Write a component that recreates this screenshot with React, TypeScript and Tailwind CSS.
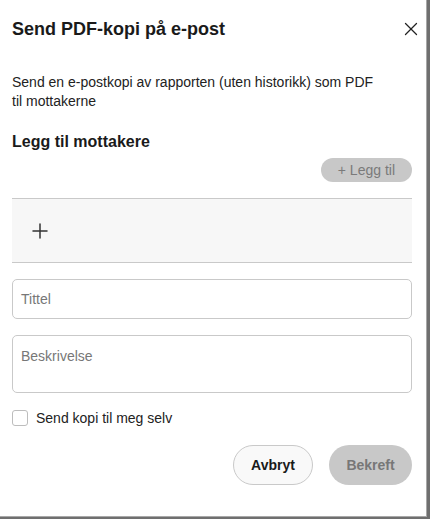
import { X, Plus } from 'lucide-react';

export default function App() {
  return (
    <div className="w-[430px] h-[519px] bg-[#6f6f6f] overflow-hidden" style={{ fontFamily: '"Liberation Sans", Arial, sans-serif' }}>
      <div className="w-[427px] h-[517px] bg-white border-r border-b border-[#a8a8a8] flex flex-col pl-3 pr-[14px]">
        {/* Header */}
        <div className="flex items-center justify-between pt-[15px] h-[42px]">
          <h2 className="text-[18px] font-bold text-[#1a1a1a] leading-[24px]">Send PDF-kopi på e-post</h2>
          <button className="text-[#222] -mr-[10px]">
            <X className="h-[22px] w-[22px]" strokeWidth={1.4} />
          </button>
        </div>

        <p className="mt-[31px] text-[14px] leading-[19px] text-[#222] pr-[28px]">
          Send en e-postkopi av rapporten (uten historikk) som PDF til mottakerne
        </p>

        <h3 className="mt-[21px] text-[16px] font-bold text-[#1a1a1a] leading-[20px]">Legg til mottakere</h3>

        <div className="flex justify-end mt-[6px]">
          <button className="h-[24px] px-[17px] rounded-full bg-[#c8c8c8] text-[#7a7a7a] text-[14px] leading-none">
            + Legg til
          </button>
        </div>

        <div className="mt-[16px] h-[65px] bg-[#f7f7f7] border-t border-b border-[#c9c9c9] flex items-center pl-[16px]">
          <Plus className="h-[24px] w-[24px] text-[#333]" strokeWidth={1.5} />
        </div>

        <div className="mt-[16px] h-[40px] border border-[#c9c9c9] rounded-[5px] flex items-center px-[8px]">
          <span className="text-[14px] text-[#777]">Tittel</span>
        </div>

        <div className="mt-[16px] h-[58px] border border-[#c9c9c9] rounded-[5px] px-[8px] pt-[8px]">
          <span className="text-[14px] text-[#777]">Beskrivelse</span>
        </div>

        <label className="mt-[17px] h-[16px] flex items-center gap-[8px]">
          <span className="w-[16px] h-[16px] border border-[#bdbdbd] rounded-[3px] bg-white" />
          <span className="text-[14px] text-[#222]">Send kopi til meg selv</span>
        </label>

        <div className="mt-[19px] flex justify-end gap-[16px]">
          <button className="h-[40px] w-[80px] rounded-full border border-[#c9c9c9] bg-[#f9f9f9] text-[14px] font-bold text-[#1a1a1a]">
            Avbryt
          </button>
          <button className="h-[40px] w-[83px] rounded-full bg-[#c8c8c8] text-[14px] font-bold text-[#777]">
            Bekreft
          </button>
        </div>
      </div>
    </div>
  );
}
